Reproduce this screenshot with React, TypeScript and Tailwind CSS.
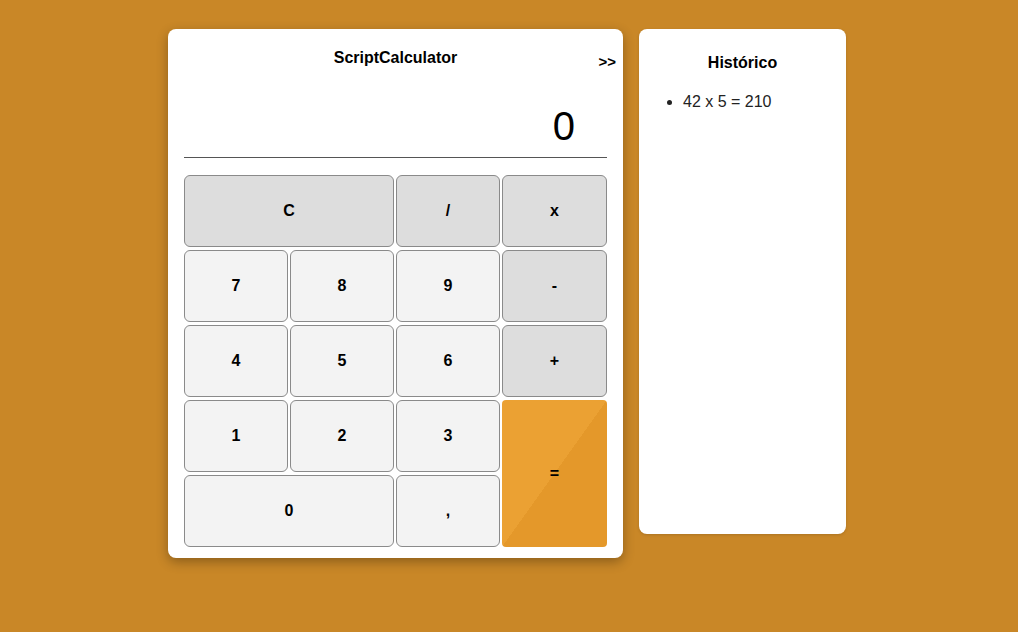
import React from "react";

const Btn = ({ label, cls }: { label: string; cls: string }) => (
  <button
    className={`flex items-center justify-center rounded-[6px] border border-[#8a8a8a] text-[16px] font-bold text-black ${cls}`}
  >
    {label}
  </button>
);

export default function App() {
  return (
    <div
      className="min-h-[632px] w-full bg-[#c98727] pt-[29px]"
      style={{ fontFamily: '"Liberation Sans", Arial, sans-serif' }}
    >
      <div className="flex items-start justify-center gap-[16px] pr-[4px]">
        <div className="relative w-[455px] rounded-[8px] bg-white px-[16px] pb-[11px] shadow-[0_4px_12px_rgba(0,0,0,0.3)]">
          <h3 className="pt-[19px] text-center text-[16px] font-bold leading-[20px] text-black">
            ScriptCalculator
          </h3>
          <span className="absolute right-[7px] top-[24px] text-[15px] font-bold leading-[18px] text-black">
            &gt;&gt;
          </span>
          <div className="flex h-[90px] items-center justify-end border-b border-[#555] pr-[32px] pt-[27px] text-[40px] leading-none text-black">
            0
          </div>
          <div className="mt-[17px] grid grid-cols-[104px_104px_104px_105px] grid-rows-[repeat(5,72px)] gap-x-[2px] gap-y-[3px]">
            <Btn label="C" cls="col-span-2 bg-[#dddddd]" />
            <Btn label="/" cls="bg-[#dddddd]" />
            <Btn label="x" cls="bg-[#dddddd]" />
            <Btn label="7" cls="bg-[#f3f3f3]" />
            <Btn label="8" cls="bg-[#f3f3f3]" />
            <Btn label="9" cls="bg-[#f3f3f3]" />
            <Btn label="-" cls="bg-[#dddddd]" />
            <Btn label="4" cls="bg-[#f3f3f3]" />
            <Btn label="5" cls="bg-[#f3f3f3]" />
            <Btn label="6" cls="bg-[#f3f3f3]" />
            <Btn label="+" cls="bg-[#dddddd]" />
            <Btn label="1" cls="bg-[#f3f3f3]" />
            <Btn label="2" cls="bg-[#f3f3f3]" />
            <Btn label="3" cls="bg-[#f3f3f3]" />
            <button className="row-span-2 flex items-center justify-center rounded-[4px] bg-[linear-gradient(to_bottom_right,#eba133_50%,#e4982a_50%)] text-[16px] font-bold text-black">
              =
            </button>
            <Btn label="0" cls="col-span-2 bg-[#f3f3f3]" />
            <Btn label="," cls="bg-[#f3f3f3]" />
          </div>
        </div>
        <div className="h-[505px] w-[207px] rounded-[8px] bg-white shadow-[0_1px_3px_rgba(0,0,0,0.15)]">
          <h3 className="pt-[24px] text-center text-[16px] font-bold leading-[20px] text-black">
            Histórico
          </h3>
          <ul className="mt-[19px] list-disc pl-[44px] text-[16px] leading-[20px] text-[#222]">
            <li>42 x 5 = 210</li>
          </ul>
        </div>
      </div>
    </div>
  );
}
